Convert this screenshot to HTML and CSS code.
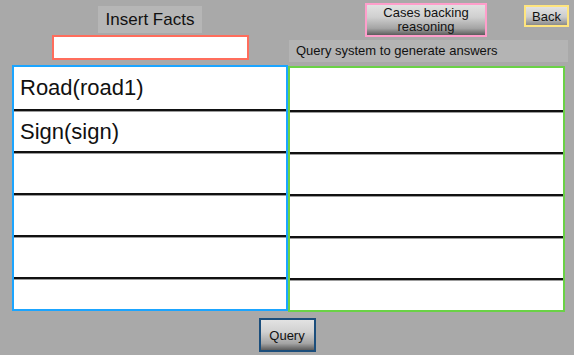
FILE: index.html
```html
<!DOCTYPE html>
<html lang="en">
<head>
  <meta charset="UTF-8">
  <meta name="viewport" content="width=device-width, initial-scale=1.0">
  <title>Insert Facts</title>
  <link rel="stylesheet" href="styles.css">
</head>
<body>
  <div class="page">
    <div class="columns">
      <div class="col col-left">
        <div class="title">Insert Facts</div>
        <input type="text" class="fact-input" id="fact">
        <div class="list list-facts">
          <div class="row">Road(road1)</div>
          <div class="row">Sign(sign)</div>
          <div class="row"></div>
          <div class="row"></div>
          <div class="row"></div>
          <div class="row"></div>
        </div>
      </div>
      <div class="col col-right">
        <div class="top-buttons">
          <button class="btn btn-cases">Cases backing<br>reasoning</button>
          <button class="btn btn-back">Back</button>
        </div>
        <div class="hint">Query system to generate answers</div>
        <div class="list list-answers">
          <div class="row"></div>
          <div class="row"></div>
          <div class="row"></div>
          <div class="row"></div>
          <div class="row"></div>
          <div class="row"></div>
        </div>
      </div>
    </div>
    <div class="bottom">
      <button class="btn btn-query">Query</button>
    </div>
  </div>
</body>
</html>
```

FILE: styles.css
```css
body {
  margin: 0;
  background-color: #a9a9a9;
  font-family: "Liberation Sans", Arial, sans-serif;
  color: #111;
}
.page {
  width: 574px;
  height: 355px;
}
.columns {
  display: flex;
  padding-left: 12px;
}
.col {
  display: flex;
  flex-direction: column;
}
.col-left {
  width: 276px;
  align-items: center;
}
.col-right {
  width: 281px;
}
.title {
  margin-top: 6px;
  width: 104px;
  height: 27px;
  background-color: #b6b6b6;
  font-size: 17px;
  line-height: 27px;
  text-align: center;
}
.fact-input {
  margin: 2px 0 0 1px;
  width: 197px;
  height: 25px;
  box-sizing: border-box;
  border: 2px solid #ff6d5c;
  background: white;
  outline: none;
}
.list {
  height: 246px;
  box-sizing: border-box;
  background: white;
  overflow: hidden;
}
.list-facts {
  margin-top: 5px;
  width: 276px;
  border: 2px solid #1ba5ff;
}
.list-answers {
  margin-top: 4px;
  width: 277px;
  border: 2px solid #6ad246;
}
.row {
  height: 42px;
  flex-shrink: 0;
  box-sizing: border-box;
  border-bottom: 2px solid #111;
  padding-left: 6px;
  display: flex;
  align-items: center;
  font-size: 22px;
}
.row:first-child {
  height: 44px;
}
.row + .row {
  border-top: 1px solid #9c9c9c;
}
.top-buttons {
  display: flex;
  align-items: flex-start;
  height: 40px;
}
.btn {
  font-family: "Liberation Sans", Arial, sans-serif;
  font-size: 13px;
  color: #111;
  box-sizing: border-box;
  padding: 0;
  background: linear-gradient(to bottom, #e2e2e2 0%, #d0d0d0 40%, #a4a4a4 78%, #5c5c5c 100%);
  cursor: pointer;
}
.btn-cases {
  margin: 3px 0 0 77px;
  width: 122px;
  height: 34px;
  border: 2px solid #ff9ecb;
  line-height: 14px;
}
.btn-back {
  margin: 5px 0 0 37px;
  width: 45px;
  height: 22px;
  border: 2px solid #ffe57e;
  background: linear-gradient(to bottom, #e2e2e2 0%, #cccccc 55%, #8a8a8a 100%);
}
.hint {
  margin-left: 1px;
  width: 279px;
  height: 22px;
  background-color: #b4b4b4;
  font-size: 13px;
  line-height: 22px;
  padding-left: 7px;
  box-sizing: border-box;
}
.bottom {
  display: flex;
  justify-content: center;
  padding: 6px 0 0 0;
}
.btn-query {
  width: 57px;
  height: 34px;
  border: 2px solid #1b4e7c;
}
```
